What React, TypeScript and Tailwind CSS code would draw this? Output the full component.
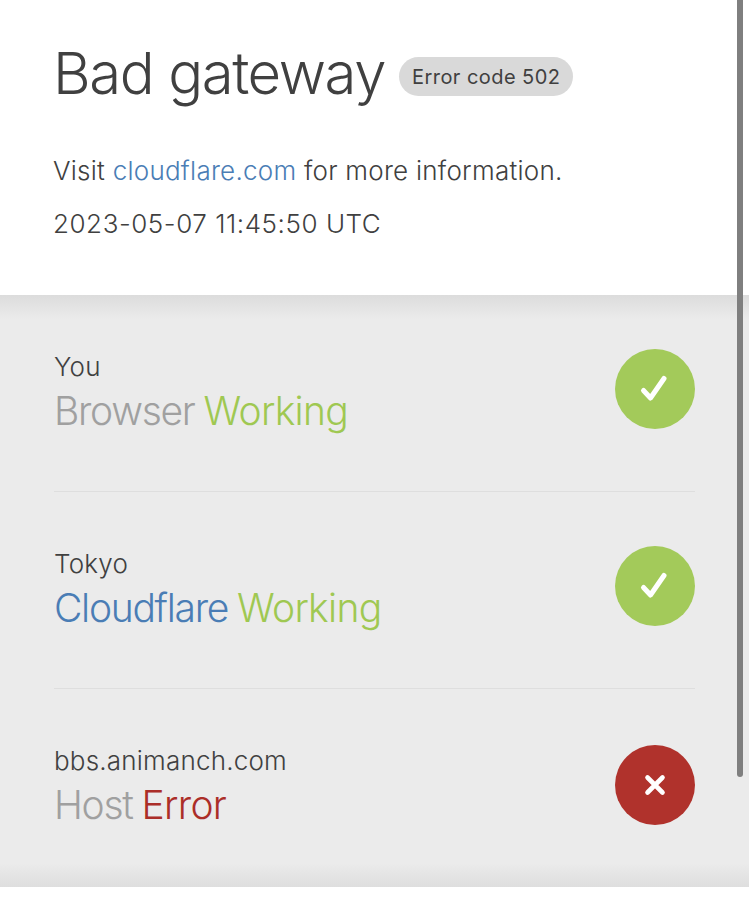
import React from "react";

function Status({ kind, className }: { kind: "ok" | "error"; className: string }) {
  return (
    <div className={`flex h-[80px] w-[80px] items-center justify-center rounded-full ${kind === "ok" ? "bg-[#a3ca5a]" : "bg-[#b0322c]"} ${className}`}>
      {kind === "ok" ? (
        <svg width="32" height="32" viewBox="0 0 32 32" fill="none" stroke="#fff" strokeWidth="5" strokeLinecap="round" strokeLinejoin="round">
          <path d="M4.5 17.5 L11.5 25 L25 5.5" />
        </svg>
      ) : (
        <svg width="22" height="22" viewBox="0 0 22 22" fill="none" stroke="#fff" strokeWidth="4.6" strokeLinecap="round">
          <path d="M3.5 3.5 L18.5 18.5 M18.5 3.5 L3.5 18.5" />
        </svg>
      )}
    </div>
  );
}

function Row({ place, name, nameClass, status, statusClass, kind, rowClass, iconClass }: {
  place: string; name: string; nameClass: string; status: string; statusClass: string; kind: "ok" | "error"; rowClass: string; iconClass: string;
}) {
  return (
    <div className={`flex items-center justify-between ${rowClass}`}>
      <div>
        <div className="text-[26px] leading-[32px] font-[350] tracking-[0.2px] text-[#404040]">{place}</div>
        <div className="mt-[5px] text-[39px] leading-[46px] font-light [word-spacing:-2px]">
          <span className={`tracking-[-1.3px] ${nameClass}`}>{name}</span> <span className={`tracking-[-0.7px] ${statusClass}`}>{status}</span>
        </div>
      </div>
      <Status kind={kind} className={iconClass} />
    </div>
  );
}

export default function App() {
  return (
    <div className="relative h-[915px] w-[749px] overflow-hidden bg-white font-['Inter',sans-serif] text-[#404040]">
      <header className="h-[295px] pl-[53px] pt-[35px]">
        <div className="flex items-center">
          <h1 className="text-[58px] leading-[76px] font-light tracking-[-1.4px] text-[#404040]">Bad gateway</h1>
          <span className="ml-[14px] mt-[7px] flex h-[39px] items-center rounded-full bg-[#d9d9d9] px-[13px] text-[20px] tracking-[0.45px] text-[#404040]">Error code 502</span>
        </div>
        <p className="mt-[40px] text-[26px] leading-[40px] font-light tracking-[0.25px] text-[#404040]">
          Visit <span className="text-[#4a7db5]">cloudflare.com</span> for more information.
        </p>
        <p className="mt-[13px] text-[26px] leading-[40px] font-light tracking-[0.55px] text-[#404040]">2023-05-07 11:45:50 UTC</p>
      </header>
      <main className="h-[592px] bg-[linear-gradient(#dcdcdc,#ebebeb_24px,#ebebeb_568px,#dedede)] px-[54px]">
        <Row rowClass="h-[197px] border-b border-[#dedede] pb-[1px]" iconClass="mb-[7px]" place="You" name="Browser" nameClass="text-[#a0a0a0]" status="Working" statusClass="text-[#9fc852]" kind="ok" />
        <Row rowClass="h-[197px] border-b border-[#dedede] pb-[2px]" iconClass="mb-[6px]" place="Tokyo" name="Cloudflare" nameClass="text-[#4a7db5]" status="Working" statusClass="text-[#9fc852]" kind="ok" />
        <Row rowClass="h-[196px] pb-[1px]" iconClass="mb-[3px]" place="bbs.animanch.com" name="Host" nameClass="text-[#a0a0a0]" status="Error" statusClass="text-[#ab2e28]" kind="error" />
      </main>
      <div className="absolute right-[6px] top-0 h-[777px] w-[6px] rounded-b-full bg-[#7f7f7f]" />
    </div>
  );
}
